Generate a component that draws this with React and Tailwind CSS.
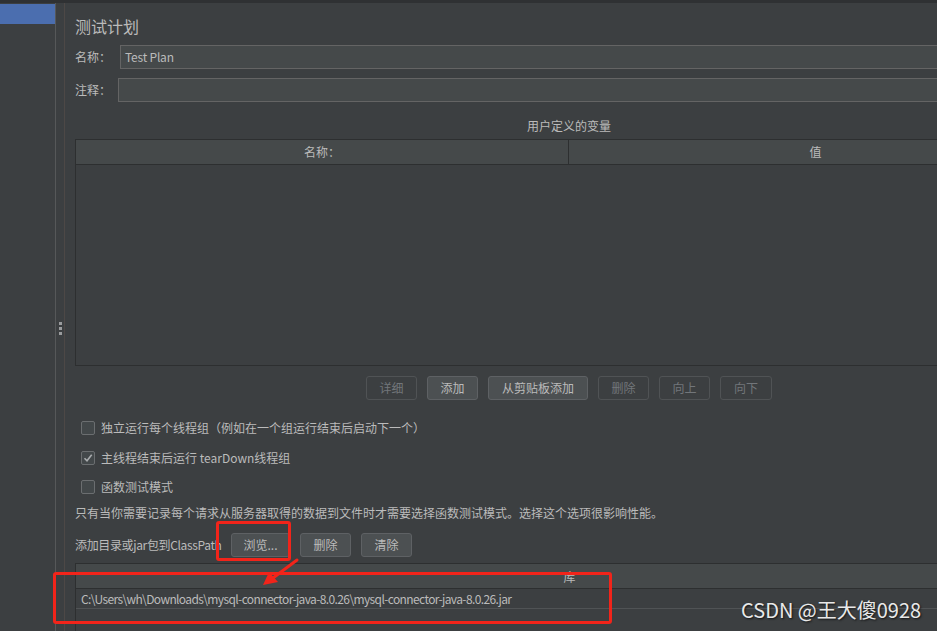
// App.jsx - JMeter "测试计划" panel (dark theme)
const Btn = ({ children, disabled, w }) => (
  <div
    className={
      disabled
        ? 'h-[24px] shrink-0 flex items-center justify-center rounded-[3px] border border-[#505355] text-[12px] text-[#72767a]'
        : 'h-[24px] shrink-0 flex items-center justify-center rounded-[3px] border border-[#5e6164] bg-[#4c5052] text-[12px] text-[#bbbbbb]'
    }
    style={{ width: w }}
  >
    {children}
  </div>
);

const CheckRow = ({ checked, label, className }) => (
  <div className={'h-[20px] flex items-center pl-[6px] gap-[6px] ' + className}>
    <div className="w-[14px] h-[14px] shrink-0 rounded-[2px] border border-[#6b6e70] bg-[#43484a] flex items-center justify-center">
      {checked && (
        <svg width="10" height="10" viewBox="0 0 10 10">
          <polyline points="1.5,5.2 4,7.8 8.7,1.8" fill="none" stroke="#a9acae" strokeWidth="1.6" />
        </svg>
      )}
    </div>
    <span className="text-[12px] leading-[20px] whitespace-nowrap">{label}</span>
  </div>
);

export default function App() {
  return (
    <div className="relative w-[937px] h-[631px] overflow-hidden bg-[#3c3f41] text-[#bbbbbb] font-['Noto_Sans_CJK_SC','Noto_Sans',sans-serif] flex flex-col">
      {/* top strip */}
      <div className="h-[3px] shrink-0 bg-[#2f3133]" />

      <div className="flex flex-1 min-h-0">
        {/* tree sidebar */}
        <div className="w-[55px] shrink-0">
          <div className="h-[1px]" />
          <div className="h-[20px] bg-[#4b6eaf]" />
        </div>
        <div className="w-px shrink-0 bg-[#565859]" />
        {/* splitter */}
        <div className="w-[8px] shrink-0 pt-[22px] flex flex-col items-center justify-center gap-[2px]">
          <div className="w-[3px] h-[3px] bg-[#9a9c9e]" />
          <div className="w-[3px] h-[3px] bg-[#9a9c9e]" />
          <div className="w-[3px] h-[3px] bg-[#9a9c9e]" />
        </div>
        <div className="w-px shrink-0 bg-[#4d4846]" />

        {/* main panel */}
        <main className="flex-1 min-w-0 pl-[10px] overflow-hidden flex flex-col">
          <div className="pt-[11px] text-[16px] leading-[24px] h-[35px] shrink-0">测试计划</div>

          <div className="mt-[7px] h-[24px] flex items-center shrink-0">
            <span className="w-[45px] shrink-0 text-[12px]">名称：</span>
            <div className="w-[900px] shrink-0 h-[24px] border border-[#646464] bg-[#45494a] px-[4px] text-[12px] leading-[22px] tracking-[-0.2px]">
              Test Plan
            </div>
          </div>

          <div className="mt-[9px] h-[24px] flex items-center shrink-0">
            <span className="w-[43px] shrink-0 text-[12px]">注释：</span>
            <div className="w-[900px] shrink-0 h-[24px] border border-[#646464] bg-[#45494a]" />
          </div>

          <div className="mt-[15px] w-[988px] shrink-0 text-center text-[12px] leading-[18px]">用户定义的变量</div>

          {/* variables table */}
          <div className="mt-[4px] w-[988px] shrink-0 border border-[#2d2f30] flex flex-col">
            <div className="grid grid-cols-2 h-[25px] bg-[#45494a] border-b border-[#2d2f30]">
              <div className="text-center text-[12px] leading-[24px] border-r border-[#2d2f30]">名称：</div>
              <div className="text-center text-[12px] leading-[24px]">值</div>
            </div>
            <div className="h-[200px]" />
          </div>

          <div className="mt-[10px] w-[988px] shrink-0 flex justify-center gap-[10px]">
            <Btn disabled w={51}>详细</Btn>
            <Btn w={51}>添加</Btn>
            <Btn w={100}>从剪贴板添加</Btn>
            <Btn disabled w={51}>删除</Btn>
            <Btn disabled w={51}>向上</Btn>
            <Btn disabled w={52}>向下</Btn>
          </div>

          <CheckRow className="mt-[18px]" label="独立运行每个线程组（例如在一个组运行结束后启动下一个）" />
          <CheckRow className="mt-[10px]" checked label="主线程结束后运行 tearDown线程组" />
          <CheckRow className="mt-[9px]" label="函数测试模式" />

          <div className="mt-[7px] h-[18px] shrink-0 text-[12px] leading-[18px] whitespace-nowrap">
            只有当你需要记录每个请求从服务器取得的数据到文件时才需要选择函数测试模式。选择这个选项很影响性能。
          </div>

          <div className="mt-[11px] h-[24px] shrink-0 flex items-center">
            <span className="w-[156px] shrink-0 text-[12px] whitespace-nowrap tracking-[-0.35px]">添加目录或jar包到ClassPath</span>
            <div className="flex gap-[10px]">
              <Btn w={59}>浏览...</Btn>
              <Btn w={51}>删除</Btn>
              <Btn w={51}>清除</Btn>
            </div>
          </div>

          {/* library table */}
          <div className="mt-[6px] w-[988px] shrink-0 flex-1 border-t border-l border-[#2d2f30] flex flex-col">
            <div className="h-[25px] bg-[#45494a] border-b border-[#2d2f30] text-center text-[12px] leading-[26px]">库</div>
            <div className="h-[20px] border-b border-[#505355] pl-[5px] text-[12px] leading-[20px] whitespace-nowrap tracking-[-0.62px]">
              C:\Users\wh\Downloads\mysql-connector-java-8.0.26\mysql-connector-java-8.0.26.jar
            </div>
          </div>
        </main>
      </div>

      {/* red annotations */}
      <div className="absolute left-[216px] top-[521px] w-[75px] h-[40px] border-[3px] border-[#f2241a] rounded-[3px]" />
      <div className="absolute left-[53px] top-[572px] w-[559px] h-[52px] border-[3px] border-[#f2241a] rounded-[3px]" />
      <svg className="absolute left-[255px] top-[554px]" width="50" height="36" viewBox="0 0 50 36">
        <line x1="42" y1="6" x2="18" y2="24" stroke="#f2241a" strokeWidth="3" strokeLinecap="round" />
        <polygon points="8,31 14,18 23,28" fill="#f2241a" />
      </svg>

      {/* watermark */}
      <div className="absolute left-[741px] top-[598px] text-[20px] leading-[24px] text-[#e9e9e9] whitespace-nowrap [text-shadow:1px_1px_2px_rgba(0,0,0,0.7)]">
        CSDN @王大傻0928
      </div>
    </div>
  );
}
